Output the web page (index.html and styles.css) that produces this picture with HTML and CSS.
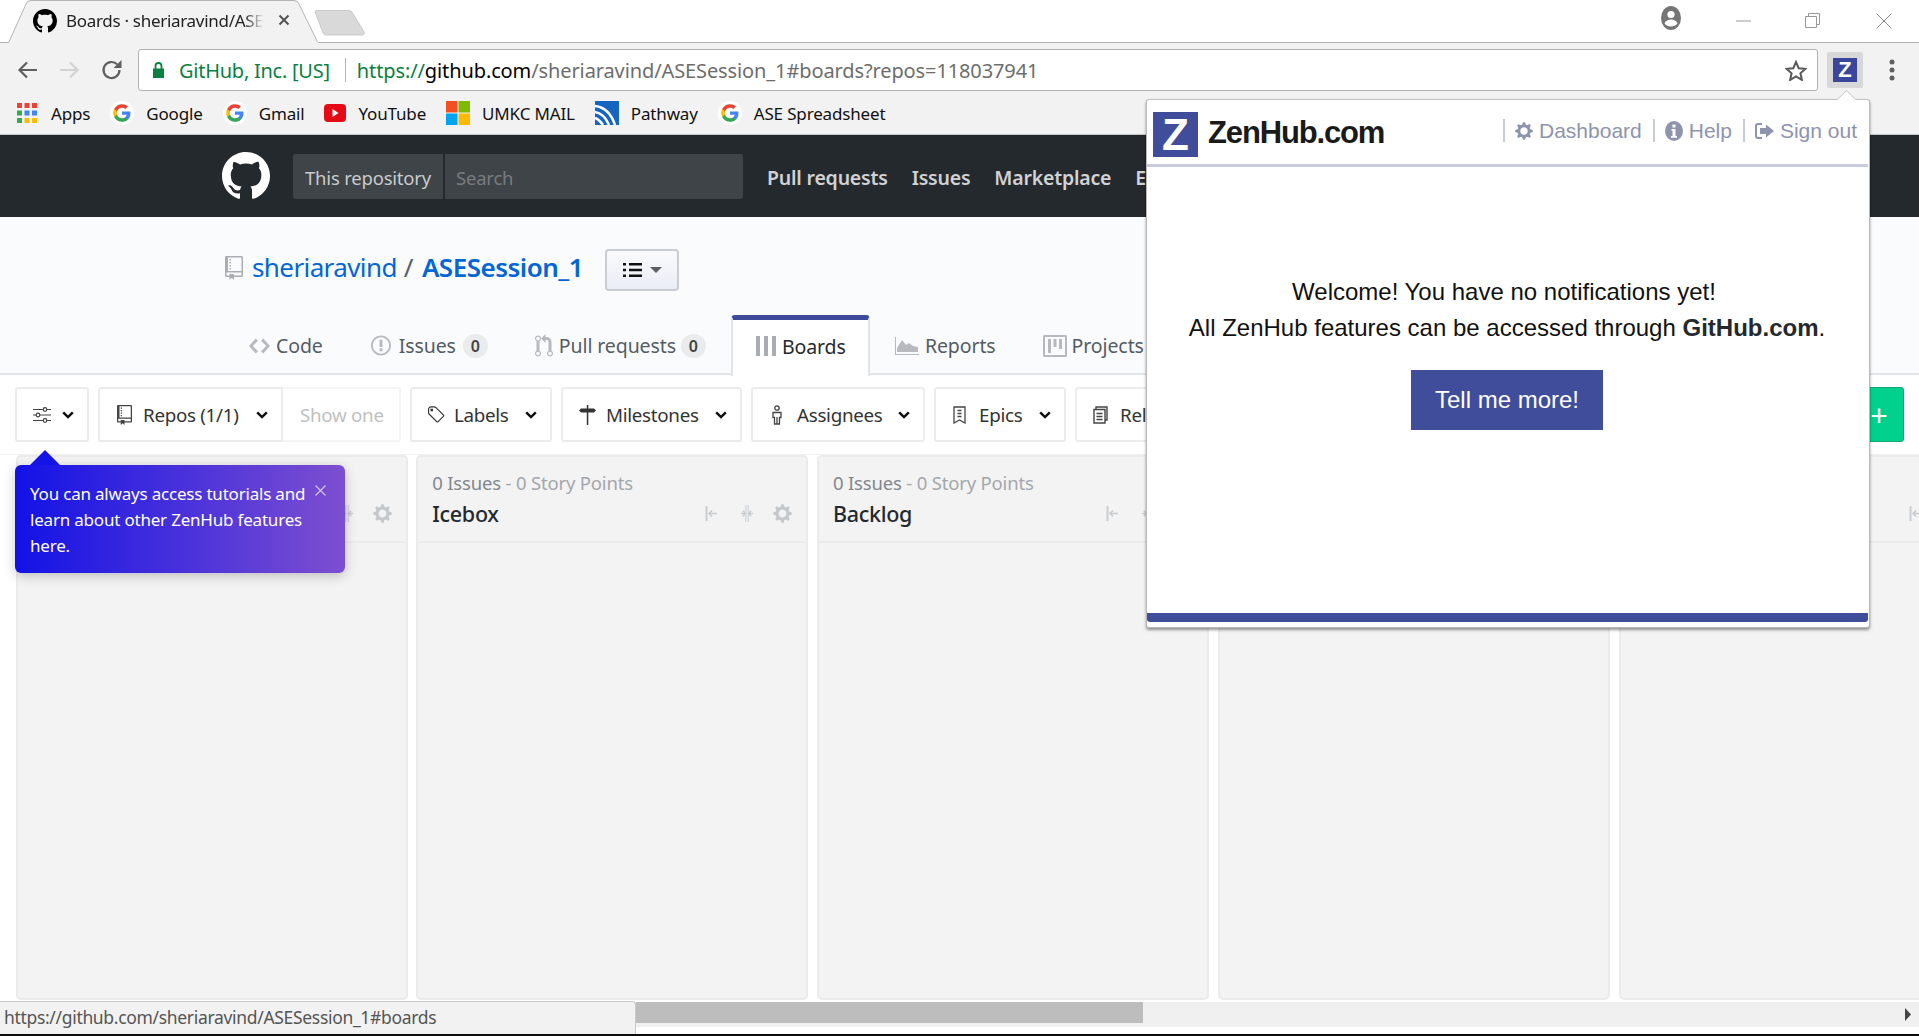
FILE: index.html
```html
<!DOCTYPE html>
<html lang="en">
<head>
<meta charset="utf-8">
<title>Boards · sheriaravind/ASESession_1</title>
<link rel="stylesheet" href="styles.css">
</head>
<body>
<svg class="defs" width="0" height="0" aria-hidden="true">
  <symbol id="gh" viewBox="0 0 16 16"><path d="M8 0C3.58 0 0 3.58 0 8c0 3.54 2.29 6.53 5.47 7.59.4.07.55-.17.55-.38 0-.19-.01-.82-.01-1.49-2.01.37-2.53-.49-2.69-.94-.09-.23-.48-.94-.82-1.13-.28-.15-.68-.52-.01-.53.63-.01 1.08.58 1.23.82.72 1.21 1.87.87 2.33.66.07-.52.28-.87.51-1.07-1.78-.2-3.64-.89-3.64-3.95 0-.87.31-1.59.82-2.15-.08-.2-.36-1.02.08-2.12 0 0 .67-.21 2.2.82.64-.18 1.32-.27 2-.27.68 0 1.36.09 2 .27 1.53-1.04 2.2-.82 2.2-.82.44 1.1.16 1.92.08 2.12.51.56.82 1.27.82 2.15 0 3.07-1.87 3.75-3.65 3.95.29.25.54.73.54 1.48 0 1.07-.01 1.93-.01 2.2 0 .21.15.46.55.38A8.013 8.013 0 0 0 16 8c0-4.42-3.58-8-8-8z"/></symbol>
  <symbol id="repo" viewBox="0 0 12 16"><path d="M4 9H3V8h1v1zm0-3H3v1h1V6zm0-2H3v1h1V4zm0-2H3v1h1V2zm8-1v12c0 .55-.45 1-1 1H6v2l-1.5-1.5L3 16v-2H1c-.55 0-1-.45-1-1V1c0-.55.45-1 1-1h10c.55 0 1 .45 1 1zm-1 10H1v2h2v-1h3v1h5v-2zm0-10H2v9h9V1z"/></symbol>
  <symbol id="gear" viewBox="0 0 14 16"><path d="M14 8.77v-1.6l-1.94-.64-.45-1.09.88-1.84-1.13-1.13-1.81.91-1.09-.45-.69-1.92h-1.6l-.63 1.94-1.11.45-1.84-.88-1.13 1.13.91 1.81-.45 1.09L0 7.23v1.59l1.94.64.45 1.09-.88 1.84 1.13 1.13 1.81-.91 1.09.45.69 1.92h1.59l.63-1.94 1.11-.45 1.84.88 1.13-1.13-.92-1.81.47-1.09L14 8.75v.02zM7 11c-1.66 0-3-1.34-3-3s1.34-3 3-3 3 1.34 3 3-1.34 3-3 3z"/></symbol>
  <symbol id="chev" viewBox="0 0 12 8"><path d="M1.200 1.300 6 6.100l4.800-4.800" fill="none" stroke="#111" stroke-width="2.500"/></symbol>
  <symbol id="g" viewBox="0 0 24 24">
    <circle cx="12" cy="12" r="12" fill="#fff"/>
    <g transform="translate(2.4 2.4) scale(.8)">
    <path fill="#4285F4" d="M22.56 12.25c0-.78-.07-1.53-.2-2.25H12v4.26h5.92c-.26 1.37-1.04 2.53-2.21 3.31v2.77h3.57c2.08-1.92 3.28-4.74 3.28-8.09z"/>
    <path fill="#34A853" d="M12 23c2.97 0 5.46-.98 7.28-2.66l-3.57-2.77c-.98.66-2.23 1.06-3.71 1.06-2.86 0-5.29-1.93-6.16-4.53H2.18v2.84C3.99 20.53 7.7 23 12 23z"/>
    <path fill="#FBBC05" d="M5.84 14.09c-.22-.66-.35-1.36-.35-2.09s.13-1.43.35-2.09V7.07H2.18C1.43 8.55 1 10.22 1 12s.43 3.45 1.18 4.93l2.85-2.22.81-.62z"/>
    <path fill="#EA4335" d="M12 5.38c1.62 0 3.06.56 4.21 1.64l3.15-3.15C17.45 2.09 14.97 1 12 1 7.7 1 3.99 3.47 2.18 7.07l3.66 2.84c.87-2.6 3.3-4.53 6.16-4.53z"/>
    </g>
  </symbol>
  <symbol id="collapse-l" viewBox="0 0 12 17"><path d="M1.500 1v15" fill="none" stroke="currentColor" stroke-width="2"/><path d="M12 8.500H4M7 5.500l-3 3 3 3" fill="none" stroke="currentColor" stroke-width="1.600"/></symbol>
  <symbol id="collapse-m" viewBox="0 0 12 17"><path d="M4.800 0v17M7.200 0v17" fill="none" stroke="currentColor" stroke-width="1"/><path d="M0 8.500h4M1.800 5.800l2.700 2.700-2.700 2.700M12 8.500H8M10.200 5.800 7.500 8.500l2.700 2.700" fill="none" stroke="currentColor" stroke-width="1.500"/></symbol>
</svg>

<header class="tabstrip">
  <div class="tab">
    <svg class="tab-shape" width="312" height="43" viewBox="0 0 312 43"><path d="M0.500 43 18 4Q19 .5 23 .5H286Q290 .5 291 4L310 43Z" fill="#f2f2f2" stroke="#b4b4b4"/><path d="M1 43H310" stroke="#f2f2f2" stroke-width="2"/></svg>
    <svg class="tab-fav" width="24" height="24"><use href="#gh"/></svg>
    <span class="tab-title">Boards · sheriaravind/ASE</span>
    <svg class="tab-x" width="12" height="12" viewBox="0 0 12 12"><path d="M1.500 1.500l9 9m0-9l-9 9" stroke="#555" stroke-width="2"/></svg>
  </div>
  <svg class="newtab" width="52" height="26" viewBox="0 0 52 26"><path d="M2 2Q2 .5 4 .5H36Q38 .5 39 2L51 22Q52 25 49 25H13Q11 25 10 23Z" fill="#d9d9d9" stroke="#cacaca"/></svg>
  <div class="winctl">
    <svg class="avatar" width="20" height="24" viewBox="0 0 20 24"><ellipse cx="10" cy="12" rx="10" ry="12" fill="#757575"/><circle cx="10" cy="8.500" r="3.600" fill="#fff"/><path d="M3.500 17.500c1-3 4-4 6.500-4s5.500 1 6.500 4c-1.500 2-4 3-6.500 3s-5-1-6.500-3z" fill="#fff"/></svg>
    <svg class="win-min" width="15" height="2"><path d="M0 1h15" stroke="#999"/></svg>
    <svg class="win-max" width="15" height="15" viewBox="0 0 15 15"><path d="M3.500 3V.5h11v11H12M.5 3.500h11v11H.5z" fill="none" stroke="#999"/></svg>
    <svg class="win-close" width="16" height="16" viewBox="0 0 16 16"><path d="M.5.500l15 15m0-15l-15 15" stroke="#888"/></svg>
  </div>
</header>

<nav class="toolbar">
  <svg class="tb-back" width="21" height="18" viewBox="0 0 21 18"><path d="M20 9H3M10 1.500 2.500 9l7.500 7.500" fill="none" stroke="#5f5f5f" stroke-width="2.200"/></svg>
  <svg class="tb-fwd" width="21" height="18" viewBox="0 0 21 18"><path d="M1 9h17M11 1.500 18.500 9 11 16.500" fill="none" stroke="#d2d2d2" stroke-width="2.200"/></svg>
  <svg class="tb-reload" width="22" height="22" viewBox="0 0 22 22"><path d="M18.500 11a8 8 0 1 1-2.400-5.700" fill="none" stroke="#5f5f5f" stroke-width="2.200"/><path d="M20.500 1v8h-8z" fill="#5f5f5f"/></svg>
  <div class="omnibox">
    <svg class="lock" width="13" height="16" viewBox="0 0 13 16"><path d="M1 6.500h11V16H1z" fill="#0b8043"/><path d="M3.500 7V4a3 3 0 0 1 6 0v3" fill="none" stroke="#0b8043" stroke-width="1.800"/></svg>
    <span class="ev">GitHub, Inc. [US]</span>
    <span class="omni-sep"></span>
    <span class="url"><span class="url-s">https://</span><span class="url-h">github.com</span>/sheriaravind/ASESession_1#boards?repos=118037941</span>
    <svg class="star" width="22" height="21" viewBox="0 0 22 21"><path d="M11 2l2.700 6.200 6.800.6-5.100 4.500 1.500 6.600L11 16.400 5.100 20l1.500-6.700L1.500 8.800l6.800-.6z" fill="none" stroke="#5a5a5a" stroke-width="2"/></svg>
  </div>
  <div class="ext-btn"><span class="ext-z">Z</span></div>
  <svg class="kebab" width="6" height="22" viewBox="0 0 6 22"><circle cx="3" cy="3" r="2.500" fill="#5f5f5f"/><circle cx="3" cy="11" r="2.500" fill="#5f5f5f"/><circle cx="3" cy="19" r="2.500" fill="#5f5f5f"/></svg>
</nav>

<nav class="bookmarks">
  <a class="bm bm-apps"><svg width="20" height="20" viewBox="0 0 20 20"><rect width="5" height="5" fill="#ea4335"/><rect x="7.500" width="5" height="5" fill="#ea4335"/><rect x="15" width="5" height="5" fill="#ea4335"/><rect y="7.500" width="5" height="5" fill="#34a853"/><rect x="7.500" y="7.500" width="5" height="5" fill="#4285f4"/><rect x="15" y="7.500" width="5" height="5" fill="#4285f4"/><rect y="15" width="5" height="5" fill="#34a853"/><rect x="7.500" y="15" width="5" height="5" fill="#fbbc05"/><rect x="15" y="15" width="5" height="5" fill="#fbbc05"/></svg>Apps</a>
  <a class="bm"><svg width="24" height="24"><use href="#g"/></svg>Google</a>
  <a class="bm"><svg width="24" height="24"><use href="#g"/></svg>Gmail</a>
  <a class="bm"><svg width="22" height="18" viewBox="0 0 22 18"><rect width="22" height="18" rx="4" fill="#e60a16"/><path d="M8.500 5v8l6-4z" fill="#fff"/></svg>YouTube</a>
  <a class="bm"><svg width="24" height="24" viewBox="0 0 24 24"><rect width="11.500" height="11.500" fill="#f25022"/><rect x="12.500" width="11.500" height="11.500" fill="#7fba00"/><rect y="12.500" width="11.500" height="11.500" fill="#00a4ef"/><rect x="12.500" y="12.500" width="11.500" height="11.500" fill="#ffb900"/></svg>UMKC MAIL</a>
  <a class="bm"><svg width="24" height="24" viewBox="0 0 24 24"><rect width="24" height="24" fill="#1565c0"/><path d="M0 5c9 1 16 7 20 19M0 11c7 1 11 6 14 13M0 17c3 1 6 4 8 7" fill="none" stroke="#fff" stroke-width="2.500"/></svg>Pathway</a>
  <a class="bm"><svg width="24" height="24"><use href="#g"/></svg>ASE Spreadsheet</a>
</nav>

<header class="gh-head">
  <svg class="gh-logo" width="48" height="48" fill="#fff"><use href="#gh"/></svg>
  <div class="gh-search"><span class="gh-scope">This repository</span><span class="gh-input">Search</span></div>
  <a class="gh-link">Pull requests</a><a class="gh-link">Issues</a><a class="gh-link">Marketplace</a><a class="gh-link">Explore</a>
</header>

<section class="repohead">
  <div class="repo-title">
    <svg class="repo-icon" width="18" height="24" fill="#a8adb3"><use href="#repo"/></svg>
    <a class="owner">sheriaravind</a><span class="slash">/</span><a class="reponame">ASESession_1</a>
    <button class="list-btn"><svg width="19" height="16" viewBox="0 0 19 16"><path d="M0 1h3v2.500H0zM0 6.800h3v2.500H0zM0 12.500h3V15H0zM6 1h13v2.500H6zM6 6.800h13v2.500H6zM6 12.500h13V15H6z" fill="#111"/></svg><svg width="12" height="6" viewBox="0 0 12 6"><path d="M0 0h12L6 6z" fill="#5b6066"/></svg></button>
  </div>
  <div class="tabs">
    <a class="rtab t-code"><svg width="21" height="24" viewBox="0 0 14 16" fill="#b6babf"><path d="M9.500 3L8 4.500 11.500 8 8 11.500 9.500 13 14 8 9.500 3zm-5 0L0 8l4.500 5L6 11.500 2.500 8 6 4.500 4.500 3z"/></svg>Code</a>
    <a class="rtab t-issues"><svg width="20" height="23" viewBox="0 0 14 16" fill="#b6babf"><path d="M7 2.300c3.140 0 5.700 2.560 5.700 5.700s-2.560 5.700-5.700 5.700A5.710 5.710 0 0 1 1.300 8c0-3.140 2.560-5.700 5.700-5.700zM7 1C3.140 1 0 4.140 0 8s3.140 7 7 7 7-3.140 7-7-3.140-7-7-7zm1 3H6v5h2V4zm0 6H6v2h2v-2z"/></svg>Issues<span class="badge">0</span></a>
    <a class="rtab t-pulls"><svg width="18" height="24" viewBox="0 0 12 16" fill="#b6babf"><path d="M11 11.280V5c-.03-.78-.34-1.470-.94-2.060C9.460 2.350 8.780 2.030 8 2H7V0L4 3l3 3V4h1c.27.02.48.11.69.31.21.2.3.42.31.69v6.280A1.993 1.993 0 0 0 10 15a1.993 1.993 0 0 0 1-3.720zm-1 2.920c-.66 0-1.200-.55-1.200-1.200 0-.65.55-1.200 1.200-1.200.65 0 1.200.55 1.200 1.200 0 .65-.55 1.200-1.200 1.200zM4 3c0-1.110-.89-2-2-2a1.993 1.993 0 0 0-1 3.720v6.560A1.993 1.993 0 0 0 2 15a1.993 1.993 0 0 0 1-3.720V4.720c.59-.34 1-.98 1-1.720zm-.8 10c0 .66-.55 1.200-1.200 1.200-.65 0-1.200-.55-1.200-1.200 0-.65.55-1.200 1.200-1.200.65 0 1.200.55 1.200 1.200zM2 4.200C1.340 4.200.8 3.650.8 3c0-.65.55-1.200 1.200-1.200.65 0 1.200.55 1.200 1.200 0 .65-.55 1.200-1.200 1.200z"/></svg>Pull requests<span class="badge">0</span></a>
    <a class="rtab t-boards"><svg width="21" height="20" viewBox="0 0 21 20" fill="#a9adb3"><rect width="4" height="20"/><rect x="8" width="4" height="20"/><rect x="16" width="4" height="20"/></svg>Boards</a>
    <a class="rtab t-reports"><svg width="24" height="18" viewBox="0 0 24 18" fill="#b6babf"><path d="M0 0h1v17h23v1H0zM2 15V11l5-8 4 5 3-2 4 3 5 1v5z"/></svg>Reports</a>
    <a class="rtab t-projects"><svg width="24" height="22" viewBox="0 0 24 22" fill="#b6babf"><path d="M1 0h22l1 1v20l-1 1H1l-1-1V1zm1 2v18h20V2zM5 4h3v14H5zM10.500 4h3v8h-3zM16 4h3v10h-3z"/></svg>Projects</a>
  </div>
</section>

<section class="filters">
  <button class="fbtn f-opts"><svg width="18" height="16" viewBox="0 0 18 16" fill="none" stroke="#444" stroke-width="1.200"><path d="M0 2.500h10M13.500 2.500H18M0 8h3.500M7 8h11M0 13.500h10M13.500 13.500H18"/><circle cx="12" cy="2.500" r="1.800"/><circle cx="5" cy="8" r="1.800"/><circle cx="12" cy="13.500" r="1.800"/></svg><svg class="chev" width="12" height="8"><use href="#chev"/></svg></button>
  <div class="fgroup">
    <button class="fbtn f-repos"><svg width="15" height="20" fill="#444"><use href="#repo"/></svg><span>Repos (1/1)</span><svg class="chev" width="12" height="8"><use href="#chev"/></svg></button>
    <button class="fbtn f-show">Show one</button>
  </div>
  <button class="fbtn f-labels"><svg width="19" height="20" viewBox="0 0 14 16" fill="#333"><path d="M7.730 1.730C7.260 1.260 6.620 1 5.960 1H3.500C2.130 1 1 2.130 1 3.500v2.470c0 .66.27 1.300.73 1.770l6.060 6.060c.39.39 1.020.39 1.410 0l4.590-4.590a.996.996 0 0 0 0-1.410L7.730 1.730zM2.380 7.090c-.31-.3-.47-.7-.47-1.130V3.500c0-.88.72-1.590 1.590-1.590h2.470c.42 0 .83.16 1.130.47l6.140 6.130-4.730 4.730-6.130-6.150zM3 3h2v2H3V3z"/></svg><span>Labels</span><svg class="chev" width="12" height="8"><use href="#chev"/></svg></button>
  <button class="fbtn f-miles"><svg width="17" height="20" viewBox="0 0 17 20" fill="#333"><path d="M7.800 0h1.500v3.500H15l2 2L15 7.500H9.300V20H7.800V7.500H2L0 5.500l2-2h5.800z"/></svg><span>Milestones</span><svg class="chev" width="12" height="8"><use href="#chev"/></svg></button>
  <button class="fbtn f-assign"><svg width="14" height="20" viewBox="0 0 14 20" fill="none" stroke="#444" stroke-width="1.300"><circle cx="7" cy="3" r="2.200"/><path d="M3 7.500h8v5H9.500V19h-5v-6.500H3zM7 12v7"/></svg><span>Assignees</span><svg class="chev" width="12" height="8"><use href="#chev"/></svg></button>
  <button class="fbtn f-epics"><svg width="13" height="18" viewBox="0 0 13 18" fill="none" stroke="#444" stroke-width="1.300"><path d="M1 1h11v16l-5.500-3L1 17zM4.500 4.500h4M4.500 7.500h4M4.500 10.500h4"/></svg><span>Epics</span><svg class="chev" width="12" height="8"><use href="#chev"/></svg></button>
  <button class="fbtn f-rel"><svg width="15" height="18" viewBox="0 0 15 18" fill="none" stroke="#444" stroke-width="1.400"><path d="M3 3V1h11v13h-2M1 3.500h11V17H1zM3.500 7.500h6M3.500 10.500h6M3.500 13.500h6"/></svg><span>Release</span></button>
  <button class="addbtn">+</button>
</section>

<main class="board">
  <section class="col">
    <div class="col-head"><div class="col-meta"></div><div class="col-row"><div class="col-icons"><svg width="12" height="17"><use href="#collapse-l"/></svg><svg width="12" height="17"><use href="#collapse-m"/></svg><svg class="col-gear" width="19" height="21" fill="#c4c7cb"><use href="#gear"/></svg></div></div></div>
  </section>
  <section class="col">
    <div class="col-head"><div class="col-meta">0 Issues<span class="meta-dim"> - 0 Story Points</span></div><div class="col-row"><h3 class="col-title">Icebox</h3><div class="col-icons"><svg width="12" height="17"><use href="#collapse-l"/></svg><svg width="12" height="17"><use href="#collapse-m"/></svg><svg class="col-gear" width="19" height="21" fill="#c4c7cb"><use href="#gear"/></svg></div></div></div>
  </section>
  <section class="col">
    <div class="col-head"><div class="col-meta">0 Issues<span class="meta-dim"> - 0 Story Points</span></div><div class="col-row"><h3 class="col-title">Backlog</h3><div class="col-icons"><svg width="12" height="17"><use href="#collapse-l"/></svg><svg width="12" height="17"><use href="#collapse-m"/></svg><svg class="col-gear" width="19" height="21" fill="#c4c7cb"><use href="#gear"/></svg></div></div></div>
  </section>
  <section class="col"></section>
  <section class="col">
    <div class="col-head"><div class="col-meta"></div><div class="col-row"><div class="col-icons"><svg width="12" height="17"><use href="#collapse-l"/></svg></div></div></div>
  </section>
</main>

<div class="hscroll"><div class="hthumb"></div><svg class="harrow" width="6" height="13" viewBox="0 0 6 13"><path d="M0 0l6 6.500L0 13z" fill="#444"/></svg></div>
<div class="desk-edge"></div>

<div class="status">https://github.com/sheriaravind/ASESession_1#boards</div>

<aside class="tip">
  <span class="tip-arrow"></span>
  <p class="tip-text">You can always access tutorials and learn about other ZenHub features here.</p>
  <svg class="tip-x" width="11" height="11" viewBox="0 0 11 11"><path d="M.5.500l10 10m0-10l-10 10" stroke="#c9c4e8" stroke-width="1.300"/></svg>
</aside>

<aside class="popup">
  <span class="pop-arrow"></span>
  <header class="pop-head">
    <span class="pop-logo">Z</span><span class="pop-brand">ZenHub.com</span>
    <nav class="pop-nav">
      <a class="pop-link"><svg width="18" height="20" fill="#8e93ae"><use href="#gear"/></svg>Dashboard</a>
      <a class="pop-link"><svg width="18" height="20" viewBox="0 0 18 20"><ellipse cx="9" cy="10" rx="9" ry="10" fill="#8e93ae"/><path d="M7.500 3.500h3v3h-3zM6.500 8h4v7h1.500v1.800H6v-1.800h1.500V9.800h-1z" fill="#fff"/></svg>Help</a>
      <a class="pop-link"><svg width="19" height="18" viewBox="0 0 19 18"><path d="M7 1H3a3 3 0 0 0-3 3v10a3 3 0 0 0 3 3h4v-2H3a1 1 0 0 1-1-1V4a1 1 0 0 1 1-1h4z" fill="#8e93ae"/><path d="M11 2.500 19 9l-8 6.500V12H5V6h6z" fill="#8e93ae"/></svg>Sign out</a>
    </nav>
  </header>
  <div class="pop-body">
    <p class="pop-line pop-first">Welcome! You have no notifications yet!</p>
    <p class="pop-line">All ZenHub features can be accessed through <strong>GitHub.com</strong>.</p>
    <button class="pop-cta">Tell me more!</button>
  </div>
  <div class="pop-bar"></div>
</aside>
</body>
</html>
```
FILE: styles.css
```css
* { box-sizing: border-box; }
html, body { margin: 0; padding: 0; }
body {
  width: 1919px; height: 1036px; overflow: hidden; position: relative;
  background: #fff; display: flex; flex-direction: column;
  font-family: "Noto Sans", "Open Sans", sans-serif; color: #24292e;
}
a { text-decoration: none; color: inherit; }
button { font: inherit; cursor: default; }
p, h3 { margin: 0; }
svg { display: block; flex: none; }
.defs { position: absolute; }

/* tab strip */
.tabstrip { height: 43px; flex: none; display: flex; border-bottom: 1px solid #b4b4b4; background: #fff; }
.tab { position: relative; width: 311px; height: 43px; margin-left: 8px; display: flex; align-items: center; padding: 0 0 0 25px; }
.tab-shape { position: absolute; left: 0; top: 0; }
.tab-fav, .tab-title, .tab-x { position: relative; }
.tab-fav { margin-top: -2px; }
.tab-title { width: 198px; margin-left: 9px; margin-top: -2px; white-space: nowrap; font-size: 17px; letter-spacing: -.3px; color: #222;
  -webkit-mask-image: linear-gradient(90deg, #000 90%, transparent); mask-image: linear-gradient(90deg, #000 90%, transparent); }
.tab-x { margin-left: 14px; margin-top: -3px; }
.newtab { margin: 10px 0 0 -6px; }
.winctl { margin-left: auto; display: flex; align-items: flex-start; }
.avatar { margin-top: 6px; margin-right: 55px; }
.win-min { margin-top: 20px; margin-right: 54px; }
.win-max { margin-top: 13px; margin-right: 56px; }
.win-close { margin-top: 13px; margin-right: 27px; }

/* toolbar */
.toolbar { height: 48px; padding-top: 6px; flex: none; background: #f2f2f2; display: flex; align-items: center; }
.tb-back { margin-left: 17px; }
.tb-fwd { margin-left: 21px; }
.tb-reload { margin-left: 21px; }
.omnibox { width: 679px; flex: 1 1 auto; height: 42px; margin: 0 0 0 15px; background: #fff; border: 1px solid #b2b2b2; border-radius: 3px; display: flex; align-items: center; padding-left: 13px; font-size: 20px; letter-spacing: -.11px; white-space: nowrap; }
.lock { margin-right: 14px; }
.ev { color: #0b8043; letter-spacing: -.25px; }
.omni-sep { width: 1px; height: 24px; background: #b4b4b4; margin: 0 11px 0 15px; }
.url { color: #6d6d6d; }
.url-s { color: #0b8043; }
.url-h { color: #000; }
.star { margin-left: auto; margin-right: 10px; }
.ext-btn { width: 36px; height: 36px; margin: 0 26px 0 9px; flex: none; background: #d8d8d8; border-radius: 2px; display: flex; align-items: center; justify-content: center; }
.ext-z { width: 24px; height: 24px; background: #3a469c; color: #fff; font: bold 22px/24px "Liberation Sans", sans-serif; text-align: center; }
.kebab { margin-right: 24px; }

/* bookmarks */
.bookmarks { height: 44px; padding-top: 1px; flex: none; background: #f2f2f2; border-bottom: 1px solid #c4c4c4; display: flex; align-items: center; padding-left: 17px; gap: 20px; }
.bm { display: flex; align-items: center; gap: 12px; font-size: 17px; letter-spacing: -.16px; color: #111; }
.bm-apps { gap: 14px; }

/* github header */
.gh-head { height: 82px; flex: none; background: #24292e; display: flex; align-items: center; padding-left: 222px; }
.gh-logo { margin-right: 23px; }
.gh-search { width: 450px; height: 45px; background: #3f4448; border-radius: 3px; display: flex; align-items: center; font-size: 18.500px; letter-spacing: -.2px; }
.gh-scope { height: 45px; line-height: 47px; padding: 0 12px; width: 152px; border-right: 2px solid #24292e; color: #c9cbcc; white-space: nowrap; }
.gh-input { padding: 2px 0 0 11px; color: #787c80; }
.gh-link { margin-left: 24px; padding-top: 3px; font-size: 19.500px; font-weight: 600; letter-spacing: -.2px; color: #d1d2d3; white-space: nowrap; }

/* repo head */
.repohead { height: 158px; flex: none; background: #fafbfc; border-bottom: 2px solid #e1e4e8; display: flex; flex-direction: column; }
.repo-title { height: 42px; margin-top: 32px; padding-left: 225px; display: flex; align-items: center; font-size: 26px; letter-spacing: -.6px; color: #586069; }
.repo-icon { margin-right: 9px; margin-top: -4px; }
.owner, .reponame, .slash { padding-bottom: 7px; }
.owner, .reponame { color: #0366d6; }
.slash { margin: 0 9px 0 7px; }
.reponame { font-weight: 600; letter-spacing: -.5px; }
.list-btn { width: 74px; height: 42px; margin-left: 22px; border: 2px solid #c8cdd3; border-radius: 4px; background: linear-gradient(#f9fafc, #e9edf5); display: flex; align-items: center; justify-content: center; gap: 8px; padding: 0; }
.tabs { display: flex; align-items: stretch; height: 59px; margin-top: 24px; padding-left: 249px; font-size: 19.500px; letter-spacing: -.1px; color: #555b63; }
.rtab { display: flex; align-items: center; gap: 7px; padding-top: 2px; white-space: nowrap; }
.t-code { gap: 6px; }
.t-issues { margin-left: 48px; gap: 8px; }
.t-pulls { margin-left: 47px; gap: 6px; }
.badge { width: 25px; height: 24px; margin-left: -1px; border-radius: 12px; background: #eaebec; font-size: 16px; font-weight: 600; text-align: center; line-height: 24px; color: #444; letter-spacing: 0; }
.t-boards { margin-left: 25px; width: 139px; padding: 0 0 4px 23px; gap: 5px; height: 61px; background: #fff; border: 2px solid #e1e4e8; border-top: 5px solid #3e4b9b; border-bottom: 0; border-radius: 4px 4px 0 0; color: #24292e; position: relative; }
.t-reports { margin-left: 25px; gap: 6px; }
.t-projects { margin-left: 47px; gap: 5px; }

/* filter row */
.filters { height: 80px; flex: none; padding: 12px 15px 0 15px; display: flex; align-items: flex-start; gap: 9px; background: #fff; border-bottom: 1px solid #f0f0f0; }
.fbtn { height: 55px; background: #fff; border: 2px solid #ececec; border-radius: 3px; padding: 0 13px 0 0; display: flex; align-items: center; justify-content: flex-start; font-size: 18.800px; letter-spacing: -.3px; color: #333; flex: none; white-space: nowrap; }
.fbtn .chev { margin-left: auto; }
.f-opts { width: 74px; padding-left: 16px; }
.fgroup { display: flex; }
.f-repos { width: 185px; padding-left: 17px; gap: 11px; border-radius: 3px 0 0 3px; }
.f-show { width: 118px; padding-left: 17px; border-left: 0; border-color: #f5f5f5; color: #bfbfbf; border-radius: 0 3px 3px 0; }
.f-labels { width: 142px; padding-left: 14px; gap: 9px; }
.f-miles { width: 181px; padding-left: 16px; gap: 10px; }
.f-assign { width: 174px; padding-left: 17px; gap: 13px; }
.f-epics { width: 132px; padding-left: 17px; gap: 13px; }
.f-rel { width: 130px; padding-left: 16px; gap: 12px; }
.addbtn { width: 64px; height: 55px; margin-left: auto; padding: 3px 0 0 14px; background: #00d18c; border: 1px solid #12a878; border-radius: 3px; color: #fff; font: 400 30px/1 "Liberation Sans", sans-serif; flex: none; }

/* board */
.board { height: 545px; flex: none; display: flex; padding-left: 15.500px; gap: 8.750px; align-items: stretch; }
.col { width: 392px; flex: none; background: #f3f3f3; border: 2px solid #ebebeb; border-radius: 5px; }
.col-head { height: 86px; border-bottom: 2px solid #ebebeb; padding: 14px 14px 0; }
.col-meta { height: 24px; font-size: 18.500px; line-height: 24px; letter-spacing: -.18px; color: #82878d; white-space: nowrap; }
.meta-dim { color: #a3a7ab; }
.col-row { display: flex; align-items: center; height: 36px; }
.col-title { font-size: 21.500px; font-weight: 500; letter-spacing: -.3px; color: #24292e; }
.col-icons { margin-left: auto; display: flex; align-items: center; gap: 24px; color: #c9ccd0; }
.col-gear { margin-left: -4px; }
.col:last-child .col-icons { margin-left: 274px; }

/* bottom */
.hscroll { height: 25px; margin-top: 2px; flex: none; background: #f0f0f0; display: flex; align-items: center; position: relative; }
.hthumb { width: 507px; height: 21px; margin: -4px 0 0 636px; background: #bdbdbd; }
.harrow { position: absolute; right: 8px; top: 6px; }
.desk-edge { height: 2px; margin-top: 7px; flex: none; background: #0c0c0c; }
.status { position: absolute; left: 0; top: 1001px; width: 636px; height: 33px; padding: 0 0 0 4px; background: #f2f2f2; border: 1px solid #c9c9c9; border-width: 1px 1px 0 0; border-radius: 0 4px 0 0; font-size: 17.500px; line-height: 30px; letter-spacing: -.32px; color: #555; white-space: nowrap; }

/* tooltip */
.tip { position: absolute; left: 15px; top: 465px; width: 330px; height: 108px; border-radius: 6px; background: linear-gradient(90deg, #1212e6, #7d4fd0); box-shadow: 0 3px 12px rgba(0,0,0,.22); padding: 16px 15px 0; }
.tip-arrow { position: absolute; left: 15px; top: -15px; width: 0; height: 0; border: 15px solid transparent; border-top: 0; border-bottom-color: #1414e6; }
.tip-text { width: 295px; font-size: 17px; line-height: 26px; letter-spacing: -.2px; color: #fff; }
.tip-x { position: absolute; left: 300px; top: 20px; }

/* popup */
.popup { position: absolute; left: 1146px; top: 99px; width: 724px; height: 529px; background: #fff; border: 1px solid #b8b8b8; border-top-color: #c2c2c2; border-radius: 3px; box-shadow: 0 2px 3px rgba(0,0,0,.4); display: flex; flex-direction: column; font-family: "Liberation Sans", Arial, sans-serif; }
.pop-arrow { position: absolute; left: 691px; top: -9px; width: 17px; height: 17px; background: #fff; border: 1px solid #c2c2c2; border-width: 1px 0 0 1px; transform: rotate(45deg) scale(.8,.8); }
.pop-head { height: 67px; flex: none; margin-right: 1px; border-bottom: 3px solid #c8cbdc; display: flex; align-items: center; padding-left: 6px; position: relative; }
.pop-logo { width: 45px; height: 45px; background: #404d9b; color: #fff; font: bold 44px/45px "Liberation Sans", sans-serif; text-align: center; margin-top: 4px; }
.pop-brand { margin-left: 10px; font-size: 31px; font-weight: bold; letter-spacing: -1.150px; color: #1a1a1a; margin-top: 1px; }
.pop-nav { margin-left: auto; margin-right: 11px; display: flex; align-items: center; margin-top: -3px; }
.pop-link { display: flex; align-items: center; gap: 6px; height: 23px; font-size: 21px; color: #8e93ae; border-left: 2px solid #c8cbdc; padding-left: 10px; margin-left: 11px; white-space: nowrap; }
.pop-body { flex: 1 1 auto; display: flex; flex-direction: column; align-items: center; padding: 107px 2px 0 0; }
.pop-line { font-size: 24px; line-height: 36px; color: #111; white-space: nowrap; }
.pop-first { padding-right: 6px; }
.pop-line strong { color: #24292e; }
.pop-cta { width: 192px; height: 60px; margin-top: 24px; background: #404d9b; border: 0; color: #fff; font-size: 24px; padding: 0; }
.pop-bar { height: 9px; margin: 0 1px 5px 0; flex: none; background: #404d9b; border-radius: 0 0 3px 3px; }
```
